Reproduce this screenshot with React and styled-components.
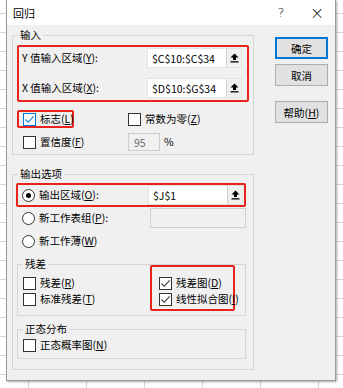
import React from "react";
import styled, { createGlobalStyle } from "styled-components";

const GlobalStyle = createGlobalStyle`
  html, body {
    margin: 0;
    padding: 0;
  }
  body {
    width: 343px;
    height: 388px;
    overflow: hidden;
    background-color: #fff;
    background-image:
      linear-gradient(to right, #d6d6d6 1px, transparent 1px),
      linear-gradient(to bottom, #d6d6d6 1px, transparent 1px);
    background-size: 58px 19px;
    background-position: 28px 13px;
    font-family: "Noto Sans CJK SC", "Noto Sans", sans-serif;
    font-size: 10.5px;
    color: #000;
  }
`;

const Dialog = styled.div`
  margin-left: 6px;
  width: 330px;
  height: 381px;
  background: #f0f0f0;
  border: 1px solid #9a9a9a;
  border-top: none;
  box-sizing: border-box;
  box-shadow: 1px 1px 2px rgba(0, 0, 0, 0.35);
  display: flex;
  flex-direction: column;
`;

const TitleBar = styled.div`
  height: 25px;
  background: #fff;
  display: flex;
  align-items: center;
  padding-left: 6px;
  font-size: 11px;
`;

const Title = styled.span`
  flex: 1;
`;

const TitleIcon = styled.span`
  width: 36px;
  text-align: center;
  font-size: ${(p) => (p.$big ? "17px" : "13px")};
  font-weight: 300;
  color: #222;
  font-family: "DejaVu Sans", sans-serif;
`;

const Body = styled.div`
  display: flex;
  padding: 2px 7px 0 4px;
`;

const LeftCol = styled.div`
  width: 244px;
  display: flex;
  flex-direction: column;
`;

const RightCol = styled.div`
  margin-left: 21px;
  margin-top: 10px;
  display: flex;
  flex-direction: column;
`;

const Button = styled.button`
  width: 53px;
  height: 22px;
  margin-top: ${(p) => p.$gap || 0}px;
  background: #e1e1e1;
  border: ${(p) => (p.$primary ? "2px solid #0078d7" : "1px solid #adadad")};
  font-family: inherit;
  font-size: 10.5px;
  color: #000;
  padding: 0;
`;

const Group = styled.fieldset`
  margin: ${(p) => p.$top || 0}px 0 0 ${(p) => p.$left || 0}px;
  padding: 0 ${(p) => p.$pr || 4}px ${(p) => p.$pb || 4}px 4px;
  border: 1px solid #d5d5d5;
  min-width: 0;
`;

const Legend = styled.legend`
  padding: 0 2px;
  margin-left: 1px;
  line-height: 16px;
  height: 16px;
  color: #000;
`;

const RedBox = styled.div`
  border: 2px solid #e8231c;
  border-radius: 2px;
  padding: ${(p) => p.$pad || "0"};
  margin: ${(p) => p.$m || "0"};
  width: ${(p) => (p.$w ? `${p.$w}px` : "auto")};
  box-sizing: border-box;
`;

const FieldRow = styled.div`
  display: flex;
  align-items: center;
  justify-content: space-between;
  height: ${(p) => p.$h || 20}px;
  margin-top: ${(p) => p.$mt || 0}px;
  padding-left: ${(p) => p.$pl || 0}px;
`;

const Label = styled.span`
  white-space: nowrap;
  line-height: 16px;
`;

const RefInput = styled.div`
  width: ${(p) => p.$w || 95}px;
  height: 20px;
  box-sizing: border-box;
  border: 1px solid ${(p) => (p.$disabled ? "#cfcfcf" : "#e3e3e3")};
  background: ${(p) => (p.$disabled ? "#f0f0f0" : "#fff")};
  display: flex;
  align-items: center;
  padding-left: 4px;
`;

const RefText = styled.span`
  flex: 1;
`;

const RefBtn = styled.span`
  width: 14px;
  height: 18px;
  border-left: 1px solid #d0d0d0;
  background: #f0f0f0;
  display: flex;
  align-items: center;
  justify-content: center;
`;

const OptGrid = styled.div`
  display: grid;
  grid-template-columns: ${(p) => p.$col || 111}px 1fr;
  align-items: start;
  margin-top: ${(p) => p.$mt || 0}px;
`;

const Opt = styled.label`
  display: flex;
  align-items: center;
  gap: 4px;
  height: ${(p) => p.$h || 16}px;
  padding-left: ${(p) => p.$pl || 0}px;
  white-space: nowrap;
`;

const Box = styled.span`
  width: 11px;
  height: 11px;
  border: 1px solid ${(p) => (p.$hover ? "#0078d7" : "#333")};
  background: #fff;
  display: flex;
  align-items: center;
  justify-content: center;
  flex-shrink: 0;
`;

const Radio = styled.span`
  width: 11px;
  height: 11px;
  border: 1px solid #333;
  border-radius: 50%;
  background: #fff;
  display: flex;
  align-items: center;
  justify-content: center;
  flex-shrink: 0;
  &::after {
    content: "";
    width: 5px;
    height: 5px;
    border-radius: 50%;
    background: ${(p) => (p.$checked ? "#000" : "transparent")};
  }
`;

const Small = styled.div`
  display: flex;
  align-items: center;
  gap: 4px;
`;

const SmallInput = styled.div`
  width: 32px;
  height: 18px;
  box-sizing: border-box;
  border: 1px solid #cfcfcf;
  background: #f0f0f0;
  color: #6d6d6d;
  display: flex;
  align-items: center;
  padding-left: 5px;
`;

const Stack = styled.div`
  display: flex;
  flex-direction: column;
  padding-top: ${(p) => p.$pt || 0}px;
`;

const Tick = ({ color }) => (
  <svg width="11" height="11" viewBox="0 0 11 11">
    <path d="M1.5 5.5 L4.3 8.3 L9.6 2.4" fill="none" stroke={color} strokeWidth="1.1" />
  </svg>
);

const UpArrow = () => (
  <svg width="9" height="10" viewBox="0 0 9 10">
    <path d="M4.5 0.5 L8.5 4.5 L6 4.5 L6 7 L3 7 L3 4.5 L0.5 4.5 Z" fill="#000" />
    <rect x="0.5" y="8.2" width="8" height="1.3" fill="#000" />
  </svg>
);

const Check = ({ checked, hover, children, h, pl }) => (
  <Opt $h={h} $pl={pl}>
    <Box $hover={hover}>{checked && <Tick color={hover ? "#0078d7" : "#333"} />}</Box>
    <Label>{children}</Label>
  </Opt>
);

const RadioOpt = ({ checked, children }) => (
  <Opt $h={20}>
    <Radio $checked={checked} />
    <Label>{children}</Label>
  </Opt>
);

const Ref = ({ value, disabled, w }) => (
  <RefInput $disabled={disabled} $w={w}>
    <RefText>{value}</RefText>
    {!disabled && (
      <RefBtn>
        <UpArrow />
      </RefBtn>
    )}
  </RefInput>
);

export default function App() {
  return (
    <>
      <GlobalStyle />
      <Dialog>
        <TitleBar>
          <Title>回归</Title>
          <TitleIcon>?</TitleIcon>
          <TitleIcon $big>×</TitleIcon>
        </TitleBar>
        <Body>
          <LeftCol>
            <Group $left={1} $pb={3}>
              <Legend>输入</Legend>
              <RedBox $pad="1px 5px 2px 3px" $m="2px 0 0 0">
                <FieldRow>
                  <Label>
                    Y 值输入区域(<u>Y</u>):
                  </Label>
                  <Ref value="$C$10:$C$34" />
                </FieldRow>
                <FieldRow $mt={10}>
                  <Label>
                    X 值输入区域(<u>X</u>):
                  </Label>
                  <Ref value="$D$10:$G$34" />
                </FieldRow>
              </RedBox>
              <OptGrid $mt={8}>
                <RedBox $w={57} $pad="0 0 0 4px">
                  <Check checked hover h={14}>
                    标志(<u>L</u>)
                  </Check>
                </RedBox>
                <Check h={18}>
                  常数为零(<u>Z</u>)
                </Check>
              </OptGrid>
              <OptGrid $mt={5}>
                <Check h={18} pl={6}>
                  置信度(<u>F</u>)
                </Check>
                <Small>
                  <SmallInput>95</SmallInput>
                  <Label>%</Label>
                </Small>
              </OptGrid>
            </Group>

            <Group $left={1} $top={11} $pb={10} $pr={7}>
              <Legend>输出选项</Legend>
              <RedBox $pad="0 1px 0 4px" $m="1px 0 0 -1px">
                <FieldRow>
                  <RadioOpt checked>
                    输出区域(<u>O</u>):
                  </RadioOpt>
                  <Ref value="$J$1" />
                </FieldRow>
              </RedBox>
              <FieldRow $mt={1} $pl={5}>
                <RadioOpt>
                  新工作表组(<u>P</u>):
                </RadioOpt>
                <Ref disabled w={96} />
              </FieldRow>
              <FieldRow $mt={3} $pl={5}>
                <RadioOpt>
                  新工作薄(<u>W</u>)
                </RadioOpt>
              </FieldRow>

              <Group $top={5} $pb={4}>
                <Legend>残差</Legend>
                <OptGrid $col={128} style={{ marginTop: -7 }}>
                  <Stack $pt={10}>
                    <Check pl={1}>
                      残差(<u>R</u>)
                    </Check>
                    <Check pl={1}>
                      标准残差(<u>T</u>)
                    </Check>
                  </Stack>
                  <RedBox $w={85} $pad="8px 0 2px 7px">
                    <Check checked>
                      残差图(<u>D</u>)
                    </Check>
                    <Check checked>
                      线性拟合图(<u>I</u>)
                    </Check>
                  </RedBox>
                </OptGrid>
              </Group>

              <Group $top={5} $pb={5}>
                <Legend>正态分布</Legend>
                <Check pl={1}>
                  正态概率图(<u>N</u>)
                </Check>
              </Group>
            </Group>
          </LeftCol>
          <RightCol>
            <Button $primary>确定</Button>
            <Button $gap={5}>取消</Button>
            <Button $gap={15}>帮助(<u>H</u>)</Button>
          </RightCol>
        </Body>
      </Dialog>
    </>
  );
}
